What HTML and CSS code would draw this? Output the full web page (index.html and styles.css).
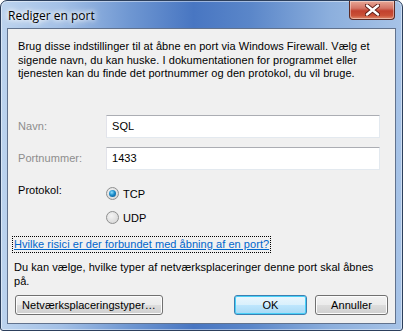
FILE: index.html
```html
<!DOCTYPE html>
<html lang="da">

<head>
    <meta charset="UTF-8">
    <title>Rediger en port</title>
    <link rel="stylesheet" href="styles.css">
</head>

<body>
    <div class="window">
        <!-- Title bar -->
        <div class="titlebar">
            <span class="title">Rediger en port</span>
            <button class="close" type="button" aria-label="Luk">
                <svg width="15" height="12" viewBox="0 0 15 12">
                    <path d="M2 1.5 L13 10.5 M13 1.5 L2 10.5" stroke="#5a1a14" stroke-width="4.2" stroke-linecap="round" />
                    <path d="M2 1.5 L13 10.5 M13 1.5 L2 10.5" stroke="#fff" stroke-width="2.4" stroke-linecap="round" />
                </svg>
            </button>
        </div>

        <!-- Dialog body -->
        <div class="panel">
            <p class="intro">
                Brug disse indstillinger til at åbne en port via Windows Firewall. Vælg et<br>
                sigende navn, du kan huske. I dokumentationen for programmet eller<br>
                tjenesten kan du finde det portnummer og den protokol, du vil bruge.
            </p>

            <div class="field-row first">
                <label class="field-label disabled" for="name">Navn:</label>
                <input class="field-input" id="name" type="text" value="SQL">
            </div>

            <div class="field-row">
                <label class="field-label disabled" for="port">Portnummer:</label>
                <input class="field-input" id="port" type="text" value="1433">
            </div>

            <div class="protocol-row">
                <span class="field-label">Protokol:</span>
                <div class="radios">
                    <label class="radio"><span class="radio-dot checked"></span>TCP</label>
                    <label class="radio"><span class="radio-dot"></span>UDP</label>
                </div>
            </div>

            <a class="help-link" href="#">Hvilke risici er der forbundet med åbning af en port?</a>

            <p class="note">
                Du kan vælge, hvilke typer af netværksplaceringer denne port skal åbnes<br>
                på.
            </p>

            <div class="buttons">
                <button class="btn wide" type="button">Netværksplaceringstyper…</button>
                <span class="spacer"></span>
                <button class="btn default" type="button">OK</button>
                <button class="btn" type="button">Annuller</button>
            </div>
        </div>
    </div>
</body>

</html>
```

FILE: styles.css
```css
body {
    margin: 0;
    padding: 0;
    background-color: #fff;
    font-family: "Liberation Sans", Arial, sans-serif;
    font-size: 11px;
    letter-spacing: 0.05px;
}

.window {
    width: 403px;
    height: 331px;
    box-sizing: border-box;
    border: 1px solid #2c3f5c;
    border-radius: 7px 7px 3px 3px;
    background: linear-gradient(90deg, #bcd3ee 0%, #a3c0e6 15%, #6f97d2 32%, #4876c2 48%, #5a86c9 62%, #8cafdd 82%, #a7c3e7 100%);
    box-shadow: inset 0 0 0 1px rgba(255, 255, 255, 0.45);
    display: flex;
    flex-direction: column;
    overflow: hidden;
}

.titlebar {
    height: 27px;
    flex: none;
    display: flex;
    align-items: flex-start;
    padding-left: 7px;
}

.title {
    font-family: "Open Sans", "Liberation Sans", sans-serif;
    font-size: 12px;
    letter-spacing: 0;
    color: #000;
    margin-top: 6px;
    text-shadow: 0 0 6px #fff, 0 0 4px #fff, 0 0 8px #fff;
    flex: 1;
}

.close {
    width: 46px;
    height: 19px;
    margin-right: 7px;
    border: 1px solid #5a2a24;
    border-top: none;
    border-radius: 0 0 4px 4px;
    background: linear-gradient(180deg, #e8a796 0%, #d47566 40%, #c2412e 55%, #c94f36 80%, #e08a6c 100%);
    box-shadow: inset 0 0 0 1px rgba(255, 255, 255, 0.4);
    padding: 0;
    display: flex;
    align-items: center;
    justify-content: center;
}

.panel {
    flex: 1;
    min-height: 0;
    margin: 0 6px 6px 6px;
    background-color: #f0f0f0;
    border: 1px solid #61728d;
    padding: 11px 7px 8px 6px;
    display: flex;
    flex-direction: column;
    overflow: hidden;
}

.intro {
    margin: 0;
    padding-left: 4px;
    line-height: 13.5px;
    white-space: nowrap;
    color: #000;
}

.field-row {
    display: flex;
    align-items: center;
    height: 23px;
    margin-top: 9px;
    padding-left: 4px;
}

.field-row.first {
    margin-top: 34px;
}

.field-label {
    width: 88px;
    flex: none;
    color: #000;
}

.field-label.disabled {
    color: #8d8d8d;
}

.field-input {
    width: 274px;
    height: 23px;
    box-sizing: border-box;
    border: 1px solid #e3e9ef;
    border-top-color: #abadb3;
    border-left-color: #e2e3ea;
    background: #fff;
    font-family: inherit;
    font-size: 11px;
    letter-spacing: 0.05px;
    padding: 0 5px;
    margin: 0;
    color: #000;
    outline: none;
}

.protocol-row {
    display: flex;
    margin-top: 14px;
    padding-left: 4px;
}

.protocol-row .field-label {
    line-height: 13px;
}

.radios {
    display: flex;
    flex-direction: column;
    gap: 8px;
    padding-top: 2px;
}

.radio {
    display: flex;
    align-items: center;
    height: 16px;
    gap: 4px;
}

.radio-dot {
    width: 11px;
    height: 11px;
    border-radius: 50%;
    border: 1px solid #8e8f8f;
    background: radial-gradient(circle at 40% 35%, #f4f4f4 0%, #dcdcdc 70%, #cfcfcf 100%);
    position: relative;
}

.radio-dot.checked::after {
    content: "";
    position: absolute;
    left: 2px;
    top: 2px;
    width: 7px;
    height: 7px;
    border-radius: 50%;
    background: radial-gradient(circle at 40% 35%, #8fe0ff 0%, #1a8bc9 45%, #0a4f86 100%);
}

.help-link {
    align-self: flex-start;
    margin-top: 12px;
    color: #0066cc;
    line-height: 13px;
    white-space: nowrap;
    outline: 1px dotted #000;
    outline-offset: 1px;
}

.note {
    margin: 9px 0 0 0;
    line-height: 14px;
    white-space: nowrap;
    color: #000;
}

.buttons {
    display: flex;
    margin-top: auto;
    padding-left: 1px;
    gap: 8px;
}

.spacer {
    flex: 1;
}

.btn {
    width: 73px;
    height: 20px;
    flex: none;
    box-sizing: border-box;
    border: 1px solid #707070;
    border-radius: 3px;
    background: linear-gradient(180deg, #f2f2f2 0%, #ebebeb 50%, #dddddd 51%, #cfcfcf 100%);
    box-shadow: inset 0 0 0 1px #fcfcfc;
    font-family: inherit;
    font-size: 11px;
    letter-spacing: 0.05px;
    color: #000;
    padding: 0;
}

.btn.wide {
    width: 148px;
}

.btn.default {
    border-color: #3c7fb1;
    background: linear-gradient(180deg, #eaf6fd 0%, #d9f0fc 50%, #bee6fd 51%, #a7d9f5 100%);
    box-shadow: inset 0 0 0 1px #48d0f8;
}
```
